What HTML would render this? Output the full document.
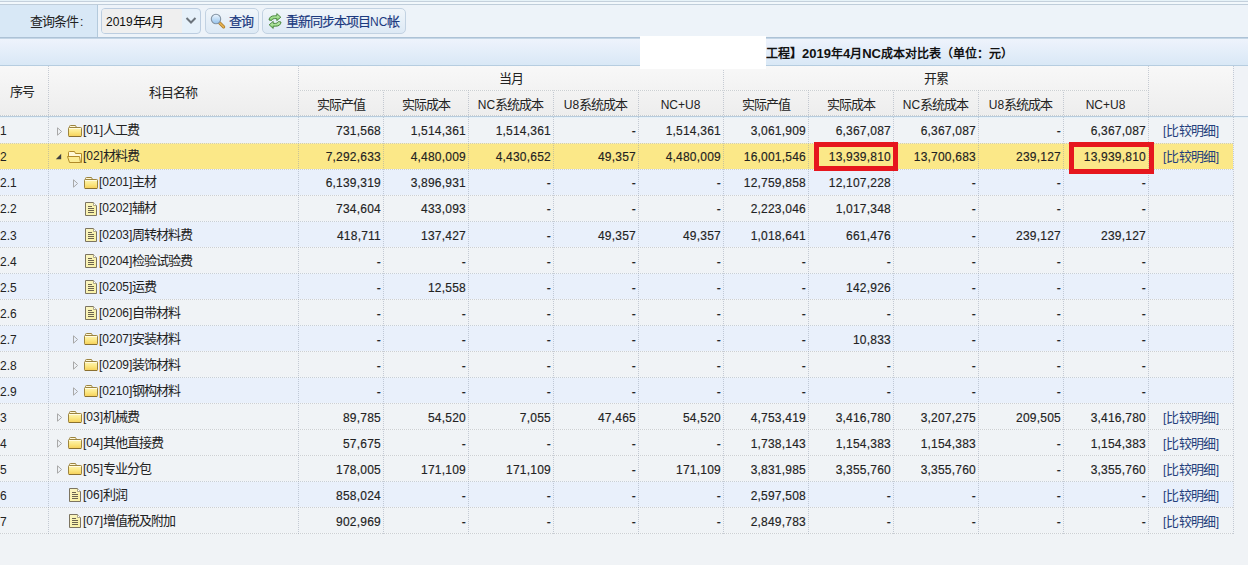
<!DOCTYPE html>
<html lang="zh-CN"><head><meta charset="utf-8"><style>
*{box-sizing:border-box}
html,body{margin:0;padding:0}
body{width:1248px;height:565px;overflow:hidden;position:relative;background:#f0f3f6;font-family:"Liberation Sans",sans-serif;font-size:12px;color:#222}
.a{position:absolute}
.ic{position:absolute}
.c{font-size:13px;letter-spacing:-1px}
.tb .c{-webkit-text-stroke:0.2px currentColor}
.lk .c{font-size:13px;letter-spacing:-0.65px}
.tl{font-size:13px}
.tl .c{font-size:12px;letter-spacing:0}
.tl .p1{margin-left:0}
.tl .p2{letter-spacing:0}
.t{position:absolute;white-space:nowrap;line-height:26px}
.n{position:absolute;white-space:nowrap;text-align:right;line-height:26px;letter-spacing:0.22px;-webkit-text-stroke:0.15px #222}
.vl{position:absolute;width:1px;background-image:linear-gradient(to bottom,rgba(140,152,170,0.45) 50%,transparent 50%);background-size:1px 2px}
.hl{position:absolute;height:1px;background-color:rgba(255,255,250,0.45);background-image:linear-gradient(to right,rgba(150,158,170,0.45) 50%,transparent 50%);background-size:2px 1px}
</style></head><body>

<div class="a" style="left:0;top:0;width:1248px;height:1px;background:#e6f2f8"></div>
<div class="a" style="left:0;top:1px;width:1248px;height:1px;background:#c4d0dc"></div>
<div class="a" style="left:0;top:2px;width:1248px;height:2px;background:#f2f8fc"></div>
<div class="a" style="left:0;top:4px;width:1248px;height:1px;background:#bfcdda"></div>
<div class="a" style="left:0;top:5px;width:1248px;height:32px;background:#edf3f9"></div>
<div class="a" style="left:0;top:5px;width:97px;height:32px;background:#d8e8f6"></div>
<div class="a" style="left:97px;top:5px;width:1px;height:32px;background:#b4cadc"></div>
<div class="a" style="left:0;top:37px;width:1248px;height:1px;background:#adc2d6"></div>
<div class="a" style="left:0;top:38px;width:1248px;height:1px;background:#c4d6e6"></div>
<div class="t" style="left:30px;top:9px;"><span class="c">查询条件</span><span style="margin-left:2px">:</span></div>
<div class="a" style="left:101px;top:8px;width:100px;height:26px;border:1px solid #bccde0;border-radius:4px;background:#e6f1fa;overflow:hidden"><div class="a" style="left:0;top:0;width:80px;height:24px;background:#efefef"></div></div>
<div class="t" style="left:106px;top:9px;color:#111">2019<span class="c">年</span>4<span class="c">月</span></div>
<svg class="ic" style="left:185px;top:16px" width="12" height="9" viewBox="0 0 12 9"><path d="M1.5 2 L6 6.5 L10.5 2" fill="none" stroke="#6c747c" stroke-width="2"/></svg>
<div class="a" style="left:205px;top:8px;width:54px;height:26px;border:1px solid #c2d2e2;border-radius:5px;background:linear-gradient(#f0f5fa,#dde9f5)"></div>
<svg class="ic" style="left:209px;top:12px" width="18" height="18" viewBox="0 0 18 18"><defs><linearGradient id="lens" x1="0" y1="0" x2="0" y2="1"><stop offset="0" stop-color="#eef7ff"/><stop offset="1" stop-color="#94c2ec"/></linearGradient></defs><path d="M10.6 10.8 L14.6 14.8" stroke="#a87828" stroke-width="3.2" stroke-linecap="round"/><path d="M10.6 10.8 L14.6 14.8" stroke="#e4b050" stroke-width="1.8" stroke-linecap="round"/><circle cx="7" cy="7" r="4.7" fill="url(#lens)" stroke="#8494a4" stroke-width="1.1"/></svg>
<div class="t tb" style="left:229px;top:9px;color:#1c3a80"><span class="c">查询</span></div>
<div class="a" style="left:262px;top:8px;width:144px;height:26px;border:1px solid #c2d2e2;border-radius:5px;background:linear-gradient(#f0f5fa,#dde9f5)"></div>
<svg class="ic" style="left:266px;top:12px" width="18" height="18" viewBox="0 0 18 18"><defs><linearGradient id="sg" x1="0" y1="0" x2="0" y2="1"><stop offset="0" stop-color="#c8f0b8"/><stop offset="1" stop-color="#84d070"/></linearGradient></defs><path d="M3 8 Q3.5 3.8 8.5 3.8 L10.8 3.8 L10.8 1.6 L14.8 5.2 L10.8 8.6 L10.8 6.6 L8.5 6.6 Q6.2 6.6 5.6 8.4 Z" fill="url(#sg)" stroke="#3c7c30" stroke-width="0.9" stroke-linejoin="round"/><path d="M15 10 Q14.5 14.2 9.5 14.2 L7.2 14.2 L7.2 16.4 L3.2 12.8 L7.2 9.4 L7.2 11.4 L9.5 11.4 Q11.8 11.4 12.4 9.6 Z" fill="url(#sg)" stroke="#3c7c30" stroke-width="0.9" stroke-linejoin="round"/></svg>
<div class="t tb" style="left:286px;top:9px;color:#1c3a80"><span class="c">重新同步本项目</span>NC<span class="c">帐</span></div>
<div class="a" style="left:0;top:39px;width:1248px;height:26px;background:linear-gradient(#eef3fc,#d9e8f6)"></div>
<div class="a" style="left:0;top:65px;width:1248px;height:1px;background:#b6cde0"></div>
<div class="t tl" style="left:766px;top:41px;font-weight:bold;color:#111"><span class="c">工程】</span>2019<span class="c">年</span>4<span class="c">月</span>NC<span class="c">成本对比表<span class="p1">（</span>单位：元<span class="p2">）</span></span></div>
<div class="a" style="left:0;top:66px;width:1233px;height:50px;background:linear-gradient(#f8f8f8,#ededed)"></div>
<div class="a" style="left:0;top:116px;width:1248px;height:1px;background:#b8cbdc"></div>
<div class="a" style="left:1233px;top:66px;width:15px;height:50px;background:#f0f3f7"></div>
<div class="vl" style="left:48px;top:66px;height:50px"></div>
<div class="vl" style="left:298px;top:66px;height:50px"></div>
<div class="vl" style="left:383px;top:90px;height:26px"></div>
<div class="vl" style="left:468px;top:90px;height:26px"></div>
<div class="vl" style="left:553px;top:90px;height:26px"></div>
<div class="vl" style="left:638px;top:90px;height:26px"></div>
<div class="vl" style="left:723px;top:66px;height:50px"></div>
<div class="vl" style="left:808px;top:90px;height:26px"></div>
<div class="vl" style="left:893px;top:90px;height:26px"></div>
<div class="vl" style="left:978px;top:90px;height:26px"></div>
<div class="vl" style="left:1063px;top:90px;height:26px"></div>
<div class="vl" style="left:1148px;top:66px;height:50px"></div>
<div class="vl" style="left:1233px;top:66px;height:50px"></div>
<div class="hl" style="left:298px;top:90px;width:850px"></div>
<div class="hl" style="left:0;top:115px;width:1233px"></div>
<div class="t" style="left:-3px;top:79px;width:50px;text-align:center;"><span class="c">序号</span></div>
<div class="t" style="left:48px;top:80px;width:250px;text-align:center;"><span class="c">科目名称</span></div>
<div class="t" style="left:298px;top:66px;width:425px;text-align:center;"><span class="c">当月</span></div>
<div class="t" style="left:723px;top:66px;width:425px;text-align:center;"><span class="c">开累</span></div>
<div class="t" style="left:298px;top:92px;width:85px;text-align:center;"><span class="c">实际产值</span></div>
<div class="t" style="left:383px;top:92px;width:85px;text-align:center;"><span class="c">实际成本</span></div>
<div class="t" style="left:468px;top:92px;width:85px;text-align:center;">NC<span class="c">系统成本</span></div>
<div class="t" style="left:553px;top:92px;width:85px;text-align:center;">U8<span class="c">系统成本</span></div>
<div class="t" style="left:638px;top:92px;width:85px;text-align:center;">NC+U8</div>
<div class="t" style="left:723px;top:92px;width:85px;text-align:center;"><span class="c">实际产值</span></div>
<div class="t" style="left:808px;top:92px;width:85px;text-align:center;"><span class="c">实际成本</span></div>
<div class="t" style="left:893px;top:92px;width:85px;text-align:center;">NC<span class="c">系统成本</span></div>
<div class="t" style="left:978px;top:92px;width:85px;text-align:center;">U8<span class="c">系统成本</span></div>
<div class="t" style="left:1063px;top:92px;width:85px;text-align:center;">NC+U8</div>
<div class="a" style="left:0;top:117px;width:1233px;height:26px;background:#f0f3f6"></div>
<div class="a" style="left:0;top:143px;width:1233px;height:26px;background:#fbe888"></div>
<div class="a" style="left:0;top:169px;width:1233px;height:26px;background:#e9f0fb"></div>
<div class="a" style="left:0;top:195px;width:1233px;height:26px;background:#f0f3f6"></div>
<div class="a" style="left:0;top:221px;width:1233px;height:26px;background:#e9f0fb"></div>
<div class="a" style="left:0;top:247px;width:1233px;height:26px;background:#f0f3f6"></div>
<div class="a" style="left:0;top:273px;width:1233px;height:26px;background:#e9f0fb"></div>
<div class="a" style="left:0;top:299px;width:1233px;height:26px;background:#f0f3f6"></div>
<div class="a" style="left:0;top:325px;width:1233px;height:26px;background:#e9f0fb"></div>
<div class="a" style="left:0;top:351px;width:1233px;height:26px;background:#f0f3f6"></div>
<div class="a" style="left:0;top:377px;width:1233px;height:26px;background:#e9f0fb"></div>
<div class="a" style="left:0;top:403px;width:1233px;height:26px;background:#f0f3f6"></div>
<div class="a" style="left:0;top:429px;width:1233px;height:26px;background:#f0f3f6"></div>
<div class="a" style="left:0;top:455px;width:1233px;height:26px;background:#f0f3f6"></div>
<div class="a" style="left:0;top:481px;width:1233px;height:26px;background:#e9f0fb"></div>
<div class="a" style="left:0;top:507px;width:1233px;height:26px;background:#f0f3f6"></div>
<div class="hl" style="left:0;top:143px;width:1233px"></div>
<div class="hl" style="left:0;top:169px;width:1233px"></div>
<div class="hl" style="left:0;top:195px;width:1233px"></div>
<div class="hl" style="left:0;top:221px;width:1233px"></div>
<div class="hl" style="left:0;top:247px;width:1233px"></div>
<div class="hl" style="left:0;top:273px;width:1233px"></div>
<div class="hl" style="left:0;top:299px;width:1233px"></div>
<div class="hl" style="left:0;top:325px;width:1233px"></div>
<div class="hl" style="left:0;top:351px;width:1233px"></div>
<div class="hl" style="left:0;top:377px;width:1233px"></div>
<div class="hl" style="left:0;top:403px;width:1233px"></div>
<div class="hl" style="left:0;top:429px;width:1233px"></div>
<div class="hl" style="left:0;top:455px;width:1233px"></div>
<div class="hl" style="left:0;top:481px;width:1233px"></div>
<div class="hl" style="left:0;top:507px;width:1233px"></div>
<div class="hl" style="left:0;top:533px;width:1233px"></div>
<div class="a" style="left:0;top:117px;width:1248px;height:1px;background:#e6f1f8"></div>
<div class="vl" style="left:48px;top:117px;height:417px"></div>
<div class="vl" style="left:298px;top:117px;height:417px"></div>
<div class="vl" style="left:383px;top:117px;height:417px"></div>
<div class="vl" style="left:468px;top:117px;height:417px"></div>
<div class="vl" style="left:553px;top:117px;height:417px"></div>
<div class="vl" style="left:638px;top:117px;height:417px"></div>
<div class="vl" style="left:723px;top:117px;height:417px"></div>
<div class="vl" style="left:808px;top:117px;height:417px"></div>
<div class="vl" style="left:893px;top:117px;height:417px"></div>
<div class="vl" style="left:978px;top:117px;height:417px"></div>
<div class="vl" style="left:1063px;top:117px;height:417px"></div>
<div class="vl" style="left:1148px;top:117px;height:417px"></div>
<div class="vl" style="left:1233px;top:117px;height:417px"></div>
<div class="t" style="left:0px;top:118px">1</div>
<svg class="ic" style="left:56px;top:127px" width="7" height="9" viewBox="0 0 7 9"><path d="M1.5 0.8 L5.6 4.5 L1.5 8.2 Z" fill="none" stroke="#a8a8a8" stroke-width="1"/></svg>
<svg class="ic" style="left:67px;top:124px" width="16" height="14" viewBox="0 0 16 14"><defs><linearGradient id="fg0" x1="0" y1="0" x2="0" y2="1"><stop offset="0" stop-color="#fff6b8"/><stop offset="0.55" stop-color="#fbe680"/><stop offset="1" stop-color="#f6cf58"/></linearGradient></defs><path d="M2.5 3.5 V2.5 Q2.5 1.5 3.5 1.5 H8.5 L9.5 3.5" fill="#fff8d8" stroke="#9c8440" stroke-width="1"/><rect x="1.5" y="3.5" width="13" height="9" rx="0.8" fill="url(#fg0)" stroke="#9c8440" stroke-width="1"/><path d="M2 4.5 H14" stroke="#fffbe0" stroke-width="1"/><path d="M2 12.5 H14" stroke="#8a7030" stroke-width="1"/></svg>
<div class="t" style="left:83px;top:117px">[01]<span class="c">人工费</span></div>
<div class="n" style="left:298px;top:118px;width:83px">731,568</div>
<div class="n" style="left:383px;top:118px;width:83px">1,514,361</div>
<div class="n" style="left:468px;top:118px;width:83px">1,514,361</div>
<div class="n" style="left:553px;top:118px;width:83px">-</div>
<div class="n" style="left:638px;top:118px;width:83px">1,514,361</div>
<div class="n" style="left:723px;top:118px;width:83px">3,061,909</div>
<div class="n" style="left:808px;top:118px;width:83px">6,367,087</div>
<div class="n" style="left:893px;top:118px;width:83px">6,367,087</div>
<div class="n" style="left:978px;top:118px;width:83px">-</div>
<div class="n" style="left:1063px;top:118px;width:83px">6,367,087</div>
<div class="t lk" style="left:1163px;top:118px;color:#24407c">[<span class="c">比较明细</span>]</div>
<div class="t" style="left:0px;top:144px">2</div>
<svg class="ic" style="left:55px;top:153px" width="7" height="7" viewBox="0 0 7 7"><path d="M6.2 0.8 L6.2 6.2 L0.8 6.2 Z" fill="#404040"/></svg>
<svg class="ic" style="left:66px;top:150px" width="17" height="14" viewBox="0 0 17 14"><path d="M2.5 6.5 V2.5 Q2.5 1.5 3.5 1.5 H8.5 L9.5 3.5 H15.5 V12.5 H14.5" fill="#fff8d4" stroke="#b08a28" stroke-width="1"/><path d="M1.5 6.5 H13.5 L14.5 12.5 H3.5 Z" fill="#fcec92" stroke="#b08a28" stroke-width="1" stroke-linejoin="round"/></svg>
<div class="t" style="left:83px;top:143px">[02]<span class="c">材料费</span></div>
<div class="n" style="left:298px;top:144px;width:83px">7,292,633</div>
<div class="n" style="left:383px;top:144px;width:83px">4,480,009</div>
<div class="n" style="left:468px;top:144px;width:83px">4,430,652</div>
<div class="n" style="left:553px;top:144px;width:83px">49,357</div>
<div class="n" style="left:638px;top:144px;width:83px">4,480,009</div>
<div class="n" style="left:723px;top:144px;width:83px">16,001,546</div>
<div class="n" style="left:808px;top:144px;width:83px">13,939,810</div>
<div class="n" style="left:893px;top:144px;width:83px">13,700,683</div>
<div class="n" style="left:978px;top:144px;width:83px">239,127</div>
<div class="n" style="left:1063px;top:144px;width:83px">13,939,810</div>
<div class="t lk" style="left:1163px;top:144px;color:#24407c">[<span class="c">比较明细</span>]</div>
<div class="t" style="left:0px;top:170px">2.1</div>
<svg class="ic" style="left:72px;top:179px" width="7" height="9" viewBox="0 0 7 9"><path d="M1.5 0.8 L5.6 4.5 L1.5 8.2 Z" fill="none" stroke="#a8a8a8" stroke-width="1"/></svg>
<svg class="ic" style="left:83px;top:176px" width="16" height="14" viewBox="0 0 16 14"><defs><linearGradient id="fg2" x1="0" y1="0" x2="0" y2="1"><stop offset="0" stop-color="#fff6b8"/><stop offset="0.55" stop-color="#fbe680"/><stop offset="1" stop-color="#f6cf58"/></linearGradient></defs><path d="M2.5 3.5 V2.5 Q2.5 1.5 3.5 1.5 H8.5 L9.5 3.5" fill="#fff8d8" stroke="#9c8440" stroke-width="1"/><rect x="1.5" y="3.5" width="13" height="9" rx="0.8" fill="url(#fg2)" stroke="#9c8440" stroke-width="1"/><path d="M2 4.5 H14" stroke="#fffbe0" stroke-width="1"/><path d="M2 12.5 H14" stroke="#8a7030" stroke-width="1"/></svg>
<div class="t" style="left:99px;top:169px">[0201]<span class="c">主材</span></div>
<div class="n" style="left:298px;top:170px;width:83px">6,139,319</div>
<div class="n" style="left:383px;top:170px;width:83px">3,896,931</div>
<div class="n" style="left:468px;top:170px;width:83px">-</div>
<div class="n" style="left:553px;top:170px;width:83px">-</div>
<div class="n" style="left:638px;top:170px;width:83px">-</div>
<div class="n" style="left:723px;top:170px;width:83px">12,759,858</div>
<div class="n" style="left:808px;top:170px;width:83px">12,107,228</div>
<div class="n" style="left:893px;top:170px;width:83px">-</div>
<div class="n" style="left:978px;top:170px;width:83px">-</div>
<div class="n" style="left:1063px;top:170px;width:83px">-</div>
<div class="t" style="left:0px;top:196px">2.2</div>
<svg class="ic" style="left:84px;top:201px" width="14" height="16" viewBox="0 0 14 16"><defs><linearGradient id="ff3" x1="0" y1="0" x2="1" y2="1"><stop offset="0" stop-color="#fbf6c4"/><stop offset="1" stop-color="#f8f0a0"/></linearGradient></defs><path d="M1.5 1.5 H9.5 L12.5 4.5 V14.5 H1.5 Z" fill="url(#ff3)" stroke="#7c7460" stroke-width="1"/><path d="M9.5 1.5 V4.5 H12.5" fill="#ffffff" stroke="#9c9478" stroke-width="0.8"/><path d="M4 5.5 H8 M4 7.5 H10 M4 9.5 H10 M4 11.5 H10" stroke="#6c6450" stroke-width="1"/></svg>
<div class="t" style="left:99px;top:195px">[0202]<span class="c">辅材</span></div>
<div class="n" style="left:298px;top:196px;width:83px">734,604</div>
<div class="n" style="left:383px;top:196px;width:83px">433,093</div>
<div class="n" style="left:468px;top:196px;width:83px">-</div>
<div class="n" style="left:553px;top:196px;width:83px">-</div>
<div class="n" style="left:638px;top:196px;width:83px">-</div>
<div class="n" style="left:723px;top:196px;width:83px">2,223,046</div>
<div class="n" style="left:808px;top:196px;width:83px">1,017,348</div>
<div class="n" style="left:893px;top:196px;width:83px">-</div>
<div class="n" style="left:978px;top:196px;width:83px">-</div>
<div class="n" style="left:1063px;top:196px;width:83px">-</div>
<div class="t" style="left:0px;top:223px">2.3</div>
<svg class="ic" style="left:84px;top:227px" width="14" height="16" viewBox="0 0 14 16"><defs><linearGradient id="ff4" x1="0" y1="0" x2="1" y2="1"><stop offset="0" stop-color="#fbf6c4"/><stop offset="1" stop-color="#f8f0a0"/></linearGradient></defs><path d="M1.5 1.5 H9.5 L12.5 4.5 V14.5 H1.5 Z" fill="url(#ff4)" stroke="#7c7460" stroke-width="1"/><path d="M9.5 1.5 V4.5 H12.5" fill="#ffffff" stroke="#9c9478" stroke-width="0.8"/><path d="M4 5.5 H8 M4 7.5 H10 M4 9.5 H10 M4 11.5 H10" stroke="#6c6450" stroke-width="1"/></svg>
<div class="t" style="left:99px;top:222px">[0203]<span class="c">周转材料费</span></div>
<div class="n" style="left:298px;top:223px;width:83px">418,711</div>
<div class="n" style="left:383px;top:223px;width:83px">137,427</div>
<div class="n" style="left:468px;top:223px;width:83px">-</div>
<div class="n" style="left:553px;top:223px;width:83px">49,357</div>
<div class="n" style="left:638px;top:223px;width:83px">49,357</div>
<div class="n" style="left:723px;top:223px;width:83px">1,018,641</div>
<div class="n" style="left:808px;top:223px;width:83px">661,476</div>
<div class="n" style="left:893px;top:223px;width:83px">-</div>
<div class="n" style="left:978px;top:223px;width:83px">239,127</div>
<div class="n" style="left:1063px;top:223px;width:83px">239,127</div>
<div class="t" style="left:0px;top:249px">2.4</div>
<svg class="ic" style="left:84px;top:253px" width="14" height="16" viewBox="0 0 14 16"><defs><linearGradient id="ff5" x1="0" y1="0" x2="1" y2="1"><stop offset="0" stop-color="#fbf6c4"/><stop offset="1" stop-color="#f8f0a0"/></linearGradient></defs><path d="M1.5 1.5 H9.5 L12.5 4.5 V14.5 H1.5 Z" fill="url(#ff5)" stroke="#7c7460" stroke-width="1"/><path d="M9.5 1.5 V4.5 H12.5" fill="#ffffff" stroke="#9c9478" stroke-width="0.8"/><path d="M4 5.5 H8 M4 7.5 H10 M4 9.5 H10 M4 11.5 H10" stroke="#6c6450" stroke-width="1"/></svg>
<div class="t" style="left:99px;top:248px">[0204]<span class="c">检验试验费</span></div>
<div class="n" style="left:298px;top:249px;width:83px">-</div>
<div class="n" style="left:383px;top:249px;width:83px">-</div>
<div class="n" style="left:468px;top:249px;width:83px">-</div>
<div class="n" style="left:553px;top:249px;width:83px">-</div>
<div class="n" style="left:638px;top:249px;width:83px">-</div>
<div class="n" style="left:723px;top:249px;width:83px">-</div>
<div class="n" style="left:808px;top:249px;width:83px">-</div>
<div class="n" style="left:893px;top:249px;width:83px">-</div>
<div class="n" style="left:978px;top:249px;width:83px">-</div>
<div class="n" style="left:1063px;top:249px;width:83px">-</div>
<div class="t" style="left:0px;top:275px">2.5</div>
<svg class="ic" style="left:84px;top:279px" width="14" height="16" viewBox="0 0 14 16"><defs><linearGradient id="ff6" x1="0" y1="0" x2="1" y2="1"><stop offset="0" stop-color="#fbf6c4"/><stop offset="1" stop-color="#f8f0a0"/></linearGradient></defs><path d="M1.5 1.5 H9.5 L12.5 4.5 V14.5 H1.5 Z" fill="url(#ff6)" stroke="#7c7460" stroke-width="1"/><path d="M9.5 1.5 V4.5 H12.5" fill="#ffffff" stroke="#9c9478" stroke-width="0.8"/><path d="M4 5.5 H8 M4 7.5 H10 M4 9.5 H10 M4 11.5 H10" stroke="#6c6450" stroke-width="1"/></svg>
<div class="t" style="left:99px;top:274px">[0205]<span class="c">运费</span></div>
<div class="n" style="left:298px;top:275px;width:83px">-</div>
<div class="n" style="left:383px;top:275px;width:83px">12,558</div>
<div class="n" style="left:468px;top:275px;width:83px">-</div>
<div class="n" style="left:553px;top:275px;width:83px">-</div>
<div class="n" style="left:638px;top:275px;width:83px">-</div>
<div class="n" style="left:723px;top:275px;width:83px">-</div>
<div class="n" style="left:808px;top:275px;width:83px">142,926</div>
<div class="n" style="left:893px;top:275px;width:83px">-</div>
<div class="n" style="left:978px;top:275px;width:83px">-</div>
<div class="n" style="left:1063px;top:275px;width:83px">-</div>
<div class="t" style="left:0px;top:301px">2.6</div>
<svg class="ic" style="left:84px;top:305px" width="14" height="16" viewBox="0 0 14 16"><defs><linearGradient id="ff7" x1="0" y1="0" x2="1" y2="1"><stop offset="0" stop-color="#fbf6c4"/><stop offset="1" stop-color="#f8f0a0"/></linearGradient></defs><path d="M1.5 1.5 H9.5 L12.5 4.5 V14.5 H1.5 Z" fill="url(#ff7)" stroke="#7c7460" stroke-width="1"/><path d="M9.5 1.5 V4.5 H12.5" fill="#ffffff" stroke="#9c9478" stroke-width="0.8"/><path d="M4 5.5 H8 M4 7.5 H10 M4 9.5 H10 M4 11.5 H10" stroke="#6c6450" stroke-width="1"/></svg>
<div class="t" style="left:99px;top:300px">[0206]<span class="c">自带材料</span></div>
<div class="n" style="left:298px;top:301px;width:83px">-</div>
<div class="n" style="left:383px;top:301px;width:83px">-</div>
<div class="n" style="left:468px;top:301px;width:83px">-</div>
<div class="n" style="left:553px;top:301px;width:83px">-</div>
<div class="n" style="left:638px;top:301px;width:83px">-</div>
<div class="n" style="left:723px;top:301px;width:83px">-</div>
<div class="n" style="left:808px;top:301px;width:83px">-</div>
<div class="n" style="left:893px;top:301px;width:83px">-</div>
<div class="n" style="left:978px;top:301px;width:83px">-</div>
<div class="n" style="left:1063px;top:301px;width:83px">-</div>
<div class="t" style="left:0px;top:327px">2.7</div>
<svg class="ic" style="left:72px;top:335px" width="7" height="9" viewBox="0 0 7 9"><path d="M1.5 0.8 L5.6 4.5 L1.5 8.2 Z" fill="none" stroke="#a8a8a8" stroke-width="1"/></svg>
<svg class="ic" style="left:83px;top:332px" width="16" height="14" viewBox="0 0 16 14"><defs><linearGradient id="fg8" x1="0" y1="0" x2="0" y2="1"><stop offset="0" stop-color="#fff6b8"/><stop offset="0.55" stop-color="#fbe680"/><stop offset="1" stop-color="#f6cf58"/></linearGradient></defs><path d="M2.5 3.5 V2.5 Q2.5 1.5 3.5 1.5 H8.5 L9.5 3.5" fill="#fff8d8" stroke="#9c8440" stroke-width="1"/><rect x="1.5" y="3.5" width="13" height="9" rx="0.8" fill="url(#fg8)" stroke="#9c8440" stroke-width="1"/><path d="M2 4.5 H14" stroke="#fffbe0" stroke-width="1"/><path d="M2 12.5 H14" stroke="#8a7030" stroke-width="1"/></svg>
<div class="t" style="left:99px;top:326px">[0207]<span class="c">安装材料</span></div>
<div class="n" style="left:298px;top:327px;width:83px">-</div>
<div class="n" style="left:383px;top:327px;width:83px">-</div>
<div class="n" style="left:468px;top:327px;width:83px">-</div>
<div class="n" style="left:553px;top:327px;width:83px">-</div>
<div class="n" style="left:638px;top:327px;width:83px">-</div>
<div class="n" style="left:723px;top:327px;width:83px">-</div>
<div class="n" style="left:808px;top:327px;width:83px">10,833</div>
<div class="n" style="left:893px;top:327px;width:83px">-</div>
<div class="n" style="left:978px;top:327px;width:83px">-</div>
<div class="n" style="left:1063px;top:327px;width:83px">-</div>
<div class="t" style="left:0px;top:353px">2.8</div>
<svg class="ic" style="left:72px;top:361px" width="7" height="9" viewBox="0 0 7 9"><path d="M1.5 0.8 L5.6 4.5 L1.5 8.2 Z" fill="none" stroke="#a8a8a8" stroke-width="1"/></svg>
<svg class="ic" style="left:83px;top:358px" width="16" height="14" viewBox="0 0 16 14"><defs><linearGradient id="fg9" x1="0" y1="0" x2="0" y2="1"><stop offset="0" stop-color="#fff6b8"/><stop offset="0.55" stop-color="#fbe680"/><stop offset="1" stop-color="#f6cf58"/></linearGradient></defs><path d="M2.5 3.5 V2.5 Q2.5 1.5 3.5 1.5 H8.5 L9.5 3.5" fill="#fff8d8" stroke="#9c8440" stroke-width="1"/><rect x="1.5" y="3.5" width="13" height="9" rx="0.8" fill="url(#fg9)" stroke="#9c8440" stroke-width="1"/><path d="M2 4.5 H14" stroke="#fffbe0" stroke-width="1"/><path d="M2 12.5 H14" stroke="#8a7030" stroke-width="1"/></svg>
<div class="t" style="left:99px;top:352px">[0209]<span class="c">装饰材料</span></div>
<div class="n" style="left:298px;top:353px;width:83px">-</div>
<div class="n" style="left:383px;top:353px;width:83px">-</div>
<div class="n" style="left:468px;top:353px;width:83px">-</div>
<div class="n" style="left:553px;top:353px;width:83px">-</div>
<div class="n" style="left:638px;top:353px;width:83px">-</div>
<div class="n" style="left:723px;top:353px;width:83px">-</div>
<div class="n" style="left:808px;top:353px;width:83px">-</div>
<div class="n" style="left:893px;top:353px;width:83px">-</div>
<div class="n" style="left:978px;top:353px;width:83px">-</div>
<div class="n" style="left:1063px;top:353px;width:83px">-</div>
<div class="t" style="left:0px;top:379px">2.9</div>
<svg class="ic" style="left:72px;top:387px" width="7" height="9" viewBox="0 0 7 9"><path d="M1.5 0.8 L5.6 4.5 L1.5 8.2 Z" fill="none" stroke="#a8a8a8" stroke-width="1"/></svg>
<svg class="ic" style="left:83px;top:384px" width="16" height="14" viewBox="0 0 16 14"><defs><linearGradient id="fg10" x1="0" y1="0" x2="0" y2="1"><stop offset="0" stop-color="#fff6b8"/><stop offset="0.55" stop-color="#fbe680"/><stop offset="1" stop-color="#f6cf58"/></linearGradient></defs><path d="M2.5 3.5 V2.5 Q2.5 1.5 3.5 1.5 H8.5 L9.5 3.5" fill="#fff8d8" stroke="#9c8440" stroke-width="1"/><rect x="1.5" y="3.5" width="13" height="9" rx="0.8" fill="url(#fg10)" stroke="#9c8440" stroke-width="1"/><path d="M2 4.5 H14" stroke="#fffbe0" stroke-width="1"/><path d="M2 12.5 H14" stroke="#8a7030" stroke-width="1"/></svg>
<div class="t" style="left:99px;top:378px">[0210]<span class="c">钢构材料</span></div>
<div class="n" style="left:298px;top:379px;width:83px">-</div>
<div class="n" style="left:383px;top:379px;width:83px">-</div>
<div class="n" style="left:468px;top:379px;width:83px">-</div>
<div class="n" style="left:553px;top:379px;width:83px">-</div>
<div class="n" style="left:638px;top:379px;width:83px">-</div>
<div class="n" style="left:723px;top:379px;width:83px">-</div>
<div class="n" style="left:808px;top:379px;width:83px">-</div>
<div class="n" style="left:893px;top:379px;width:83px">-</div>
<div class="n" style="left:978px;top:379px;width:83px">-</div>
<div class="n" style="left:1063px;top:379px;width:83px">-</div>
<div class="t" style="left:0px;top:405px">3</div>
<svg class="ic" style="left:56px;top:413px" width="7" height="9" viewBox="0 0 7 9"><path d="M1.5 0.8 L5.6 4.5 L1.5 8.2 Z" fill="none" stroke="#a8a8a8" stroke-width="1"/></svg>
<svg class="ic" style="left:67px;top:410px" width="16" height="14" viewBox="0 0 16 14"><defs><linearGradient id="fg11" x1="0" y1="0" x2="0" y2="1"><stop offset="0" stop-color="#fff6b8"/><stop offset="0.55" stop-color="#fbe680"/><stop offset="1" stop-color="#f6cf58"/></linearGradient></defs><path d="M2.5 3.5 V2.5 Q2.5 1.5 3.5 1.5 H8.5 L9.5 3.5" fill="#fff8d8" stroke="#9c8440" stroke-width="1"/><rect x="1.5" y="3.5" width="13" height="9" rx="0.8" fill="url(#fg11)" stroke="#9c8440" stroke-width="1"/><path d="M2 4.5 H14" stroke="#fffbe0" stroke-width="1"/><path d="M2 12.5 H14" stroke="#8a7030" stroke-width="1"/></svg>
<div class="t" style="left:83px;top:404px">[03]<span class="c">机械费</span></div>
<div class="n" style="left:298px;top:405px;width:83px">89,785</div>
<div class="n" style="left:383px;top:405px;width:83px">54,520</div>
<div class="n" style="left:468px;top:405px;width:83px">7,055</div>
<div class="n" style="left:553px;top:405px;width:83px">47,465</div>
<div class="n" style="left:638px;top:405px;width:83px">54,520</div>
<div class="n" style="left:723px;top:405px;width:83px">4,753,419</div>
<div class="n" style="left:808px;top:405px;width:83px">3,416,780</div>
<div class="n" style="left:893px;top:405px;width:83px">3,207,275</div>
<div class="n" style="left:978px;top:405px;width:83px">209,505</div>
<div class="n" style="left:1063px;top:405px;width:83px">3,416,780</div>
<div class="t lk" style="left:1163px;top:405px;color:#24407c">[<span class="c">比较明细</span>]</div>
<div class="t" style="left:0px;top:431px">4</div>
<svg class="ic" style="left:56px;top:439px" width="7" height="9" viewBox="0 0 7 9"><path d="M1.5 0.8 L5.6 4.5 L1.5 8.2 Z" fill="none" stroke="#a8a8a8" stroke-width="1"/></svg>
<svg class="ic" style="left:67px;top:436px" width="16" height="14" viewBox="0 0 16 14"><defs><linearGradient id="fg12" x1="0" y1="0" x2="0" y2="1"><stop offset="0" stop-color="#fff6b8"/><stop offset="0.55" stop-color="#fbe680"/><stop offset="1" stop-color="#f6cf58"/></linearGradient></defs><path d="M2.5 3.5 V2.5 Q2.5 1.5 3.5 1.5 H8.5 L9.5 3.5" fill="#fff8d8" stroke="#9c8440" stroke-width="1"/><rect x="1.5" y="3.5" width="13" height="9" rx="0.8" fill="url(#fg12)" stroke="#9c8440" stroke-width="1"/><path d="M2 4.5 H14" stroke="#fffbe0" stroke-width="1"/><path d="M2 12.5 H14" stroke="#8a7030" stroke-width="1"/></svg>
<div class="t" style="left:83px;top:430px">[04]<span class="c">其他直接费</span></div>
<div class="n" style="left:298px;top:431px;width:83px">57,675</div>
<div class="n" style="left:383px;top:431px;width:83px">-</div>
<div class="n" style="left:468px;top:431px;width:83px">-</div>
<div class="n" style="left:553px;top:431px;width:83px">-</div>
<div class="n" style="left:638px;top:431px;width:83px">-</div>
<div class="n" style="left:723px;top:431px;width:83px">1,738,143</div>
<div class="n" style="left:808px;top:431px;width:83px">1,154,383</div>
<div class="n" style="left:893px;top:431px;width:83px">1,154,383</div>
<div class="n" style="left:978px;top:431px;width:83px">-</div>
<div class="n" style="left:1063px;top:431px;width:83px">1,154,383</div>
<div class="t lk" style="left:1163px;top:431px;color:#24407c">[<span class="c">比较明细</span>]</div>
<div class="t" style="left:0px;top:457px">5</div>
<svg class="ic" style="left:56px;top:465px" width="7" height="9" viewBox="0 0 7 9"><path d="M1.5 0.8 L5.6 4.5 L1.5 8.2 Z" fill="none" stroke="#a8a8a8" stroke-width="1"/></svg>
<svg class="ic" style="left:67px;top:462px" width="16" height="14" viewBox="0 0 16 14"><defs><linearGradient id="fg13" x1="0" y1="0" x2="0" y2="1"><stop offset="0" stop-color="#fff6b8"/><stop offset="0.55" stop-color="#fbe680"/><stop offset="1" stop-color="#f6cf58"/></linearGradient></defs><path d="M2.5 3.5 V2.5 Q2.5 1.5 3.5 1.5 H8.5 L9.5 3.5" fill="#fff8d8" stroke="#9c8440" stroke-width="1"/><rect x="1.5" y="3.5" width="13" height="9" rx="0.8" fill="url(#fg13)" stroke="#9c8440" stroke-width="1"/><path d="M2 4.5 H14" stroke="#fffbe0" stroke-width="1"/><path d="M2 12.5 H14" stroke="#8a7030" stroke-width="1"/></svg>
<div class="t" style="left:83px;top:456px">[05]<span class="c">专业分包</span></div>
<div class="n" style="left:298px;top:457px;width:83px">178,005</div>
<div class="n" style="left:383px;top:457px;width:83px">171,109</div>
<div class="n" style="left:468px;top:457px;width:83px">171,109</div>
<div class="n" style="left:553px;top:457px;width:83px">-</div>
<div class="n" style="left:638px;top:457px;width:83px">171,109</div>
<div class="n" style="left:723px;top:457px;width:83px">3,831,985</div>
<div class="n" style="left:808px;top:457px;width:83px">3,355,760</div>
<div class="n" style="left:893px;top:457px;width:83px">3,355,760</div>
<div class="n" style="left:978px;top:457px;width:83px">-</div>
<div class="n" style="left:1063px;top:457px;width:83px">3,355,760</div>
<div class="t lk" style="left:1163px;top:457px;color:#24407c">[<span class="c">比较明细</span>]</div>
<div class="t" style="left:0px;top:483px">6</div>
<svg class="ic" style="left:68px;top:487px" width="14" height="16" viewBox="0 0 14 16"><defs><linearGradient id="ff14" x1="0" y1="0" x2="1" y2="1"><stop offset="0" stop-color="#fbf6c4"/><stop offset="1" stop-color="#f8f0a0"/></linearGradient></defs><path d="M1.5 1.5 H9.5 L12.5 4.5 V14.5 H1.5 Z" fill="url(#ff14)" stroke="#7c7460" stroke-width="1"/><path d="M9.5 1.5 V4.5 H12.5" fill="#ffffff" stroke="#9c9478" stroke-width="0.8"/><path d="M4 5.5 H8 M4 7.5 H10 M4 9.5 H10 M4 11.5 H10" stroke="#6c6450" stroke-width="1"/></svg>
<div class="t" style="left:83px;top:482px">[06]<span class="c">利润</span></div>
<div class="n" style="left:298px;top:483px;width:83px">858,024</div>
<div class="n" style="left:383px;top:483px;width:83px">-</div>
<div class="n" style="left:468px;top:483px;width:83px">-</div>
<div class="n" style="left:553px;top:483px;width:83px">-</div>
<div class="n" style="left:638px;top:483px;width:83px">-</div>
<div class="n" style="left:723px;top:483px;width:83px">2,597,508</div>
<div class="n" style="left:808px;top:483px;width:83px">-</div>
<div class="n" style="left:893px;top:483px;width:83px">-</div>
<div class="n" style="left:978px;top:483px;width:83px">-</div>
<div class="n" style="left:1063px;top:483px;width:83px">-</div>
<div class="t lk" style="left:1163px;top:483px;color:#24407c">[<span class="c">比较明细</span>]</div>
<div class="t" style="left:0px;top:509px">7</div>
<svg class="ic" style="left:68px;top:513px" width="14" height="16" viewBox="0 0 14 16"><defs><linearGradient id="ff15" x1="0" y1="0" x2="1" y2="1"><stop offset="0" stop-color="#fbf6c4"/><stop offset="1" stop-color="#f8f0a0"/></linearGradient></defs><path d="M1.5 1.5 H9.5 L12.5 4.5 V14.5 H1.5 Z" fill="url(#ff15)" stroke="#7c7460" stroke-width="1"/><path d="M9.5 1.5 V4.5 H12.5" fill="#ffffff" stroke="#9c9478" stroke-width="0.8"/><path d="M4 5.5 H8 M4 7.5 H10 M4 9.5 H10 M4 11.5 H10" stroke="#6c6450" stroke-width="1"/></svg>
<div class="t" style="left:83px;top:508px">[07]<span class="c">增值税及附加</span></div>
<div class="n" style="left:298px;top:509px;width:83px">902,969</div>
<div class="n" style="left:383px;top:509px;width:83px">-</div>
<div class="n" style="left:468px;top:509px;width:83px">-</div>
<div class="n" style="left:553px;top:509px;width:83px">-</div>
<div class="n" style="left:638px;top:509px;width:83px">-</div>
<div class="n" style="left:723px;top:509px;width:83px">2,849,783</div>
<div class="n" style="left:808px;top:509px;width:83px">-</div>
<div class="n" style="left:893px;top:509px;width:83px">-</div>
<div class="n" style="left:978px;top:509px;width:83px">-</div>
<div class="n" style="left:1063px;top:509px;width:83px">-</div>
<div class="t lk" style="left:1163px;top:509px;color:#24407c">[<span class="c">比较明细</span>]</div>
<div class="a" style="left:640px;top:36px;width:126px;height:33px;background:#ffffff"></div>
<div class="a" style="left:814px;top:142px;width:84px;height:29px;border:5px solid #e6161e"></div>
<div class="a" style="left:1069px;top:142px;width:85px;height:32px;border:5px solid #e6161e"></div>
</body></html>
